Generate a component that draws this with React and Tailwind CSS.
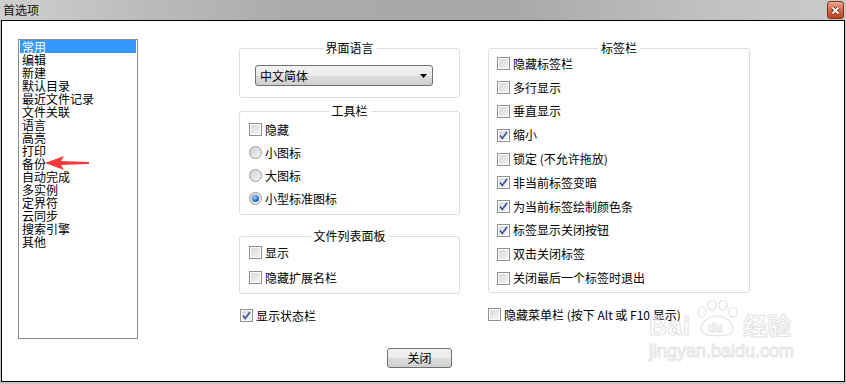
import React from "react";

const F = "font-['Noto_Sans_CJK_SC','Noto_Sans',sans-serif]";

function Check({ checked }) {
  return (
    <span className="relative flex h-[13px] w-[13px] shrink-0 items-center justify-center border border-[#8e8f8f] bg-white">
      <span className="h-[9px] w-[9px] bg-[linear-gradient(135deg,#d8d8d8,#f4f4f4)]" />
      {checked && (
        <svg className="absolute left-[1px] top-[1px]" width="9" height="9" viewBox="0 0 9 9">
          <path d="M1 4.5 L3.3 7.5 L8 1" fill="none" stroke="#3c4f9c" strokeWidth="1.6" />
        </svg>
      )}
    </span>
  );
}

function Radio({ checked }) {
  return (
    <span className="flex h-[13px] w-[13px] shrink-0 items-center justify-center rounded-full border border-[#9a9a9a] bg-[linear-gradient(135deg,#d0d0d0,#f6f6f6)]">
      {checked && (
        <span className="h-[7px] w-[7px] rounded-full bg-[radial-gradient(circle_at_40%_35%,#9fd3ff,#1a6fc9_60%,#0b4d9a)]" />
      )}
    </span>
  );
}

function CRow({ label, checked, h = "h-[23px]" }) {
  return (
    <div className={`flex items-center gap-[3px] ${h}`}>
      <Check checked={checked} />
      <span className="text-[12px] leading-[14px] text-black">{label}</span>
    </div>
  );
}

function RRow({ label, checked }) {
  return (
    <div className="flex h-[23px] items-center gap-[3px]">
      <Radio checked={checked} />
      <span className="text-[12px] leading-[14px] text-black">{label}</span>
    </div>
  );
}

function Group({ title, className, children }) {
  return (
    <div className={`relative rounded-[3px] border border-[#d5dfe5] ${className}`}>
      <span className="absolute left-1/2 top-[-8px] -translate-x-1/2 bg-white px-[3px] text-[12px] leading-[14px] text-black whitespace-nowrap">
        {title}
      </span>
      {children}
    </div>
  );
}

const items = [
  "常用", "编辑", "新建", "默认目录", "最近文件记录", "文件关联", "语言", "高亮", "打印",
  "备份", "自动完成", "多实例", "定界符", "云同步", "搜索引擎", "其他",
];

export default function App() {
  return (
    <div className={`relative h-[384px] w-[846px] overflow-hidden bg-[#c4c4c4] ${F}`}>
      {/* title bar */}
      <div className="flex h-[20px] items-center justify-between bg-[linear-gradient(90deg,#d0d0d0_0%,#bdbdbd_15%,#aaaaaa_35%,#a8a8a8_60%,#c2c2c2_85%,#cacaca_100%)] pl-[3px] pr-[2px]">
        <span className="text-[12px] leading-[14px] text-[#111]">首选项</span>
        <span className="flex h-[18px] w-[17px] items-center justify-center rounded-[3px] border border-[#7a3a28] bg-[linear-gradient(180deg,#eba58d_0%,#d9694b_50%,#c0401f_100%)]">
          <svg width="9" height="9" viewBox="0 0 9 9">
            <path d="M1.5 1.5 L7.5 7.5 M7.5 1.5 L1.5 7.5" stroke="#5a2010" strokeWidth="3.2" />
            <path d="M1.5 1.5 L7.5 7.5 M7.5 1.5 L1.5 7.5" stroke="#ffffff" strokeWidth="1.8" />
          </svg>
        </span>
      </div>

      {/* content */}
      <div className="ml-[1px] flex h-[362px] w-[844px] flex-col border border-black bg-white">
        <div className="flex items-start pl-[16px] pt-[18px]">
          {/* list */}
          <div className="h-[300px] w-[120px] shrink-0 border border-[#8b8b8b] bg-white">
            {items.map((it, i) => (
              <div
                key={it}
                className={`mx-[1px] h-[13px] pl-[2px] text-[12px] leading-[13px] ${
                  i === 0 ? "bg-[#3399ff] text-white" : "text-black"
                }`}
              >
                {it}
              </div>
            ))}
          </div>

          {/* middle column */}
          <div className="ml-[101px] mt-[9px] flex w-[221px] flex-col">
            <Group title="界面语言" className="h-[50px]">
              <div className="ml-[15px] mt-[16px] flex h-[21px] w-[178px] items-center justify-between rounded-[3px] border border-[#707070] bg-[linear-gradient(180deg,#f2f2f2_0%,#ebebeb_50%,#dddddd_51%,#cfcfcf_100%)] pl-[4px] pr-[5px]">
                <span className="text-[12px] leading-[14px] text-black">中文简体</span>
                <svg width="7" height="4" viewBox="0 0 7 4">
                  <path d="M0 0 H7 L3.5 4 Z" fill="#000" />
                </svg>
              </div>
            </Group>
            <Group title="工具栏" className="mt-[13px] h-[104px] pl-[9px] pt-[6px]">
              <CRow label="隐藏" />
              <RRow label="小图标" />
              <RRow label="大图标" />
              <RRow label="小型标准图标" checked />
            </Group>
            <Group title="文件列表面板" className="mt-[21px] h-[58px] pl-[9px] pt-[3px]">
              <CRow label="显示" h="h-[25px]" />
              <CRow label="隐藏扩展名栏" h="h-[25px]" />
            </Group>
            <div className="ml-[1px] mt-[10px]">
              <CRow label="显示状态栏" checked />
            </div>
          </div>

          {/* right column */}
          <div className="ml-[28px] mt-[9px] flex w-[262px] flex-col">
            <Group title="标签栏" className="h-[245px] pl-[8px] pt-[3px]">
              {[
                ["隐藏标签栏", false],
                ["多行显示", false],
                ["垂直显示", false],
                ["缩小", true],
                ["锁定 (不允许拖放)", false],
                ["非当前标签变暗", true],
                ["为当前标签绘制颜色条", true],
                ["标签显示关闭按钮", true],
                ["双击关闭标签", false],
                ["关闭最后一个标签时退出", false],
              ].map(([l, c]) => (
                <CRow key={l} label={l} checked={c} h="h-[23.8px]" />
              ))}
            </Group>
            <div className="mt-[10px]">
              <CRow label="隐藏菜单栏 (按下 Alt 或 F10 显示)" />
            </div>
          </div>
        </div>

        {/* close button */}
        <div className="ml-[385px] mt-[9px] flex h-[20px] w-[65px] items-center justify-center rounded-[3px] border border-[#707070] bg-[linear-gradient(180deg,#f2f2f2_0%,#ebebeb_50%,#dddddd_51%,#cfcfcf_100%)]">
          <span className="text-[12px] leading-[14px] text-black">关闭</span>
        </div>
      </div>

      {/* red arrow annotation */}
      <svg className="absolute left-[44px] top-[154px]" width="46" height="18" viewBox="0 0 46 18">
        <path d="M1 9 L20 2 L17 7 L45 8 L45 10 L17 11 L20 16 Z" fill="#f23a3a" />
      </svg>

      {/* watermark */}
      <div className="pointer-events-none absolute left-[649px] top-[300px] flex flex-col">
        <div className="flex items-end gap-[3px]">
          <span className="text-[25px] font-bold leading-[24px] tracking-[1px] text-transparent [-webkit-text-stroke:1px_#e2e2e2] font-['Liberation_Sans',sans-serif]">Bai</span>
          <svg width="46" height="38" viewBox="0 0 46 38">
            <g fill="none" stroke="#e2e2e2" strokeWidth="1.2">
              <ellipse cx="8" cy="12" rx="4" ry="5" />
              <ellipse cx="18" cy="5" rx="4" ry="5" />
              <ellipse cx="29" cy="5" rx="4" ry="5" />
              <ellipse cx="39" cy="12" rx="4" ry="5" />
              <path d="M8 32 C4 22 16 16 23 16 C30 16 42 22 38 32 C36 37 10 37 8 32 Z" />
            </g>
            <text x="14" y="32" fontSize="12" fontWeight="bold" fill="none" stroke="#e2e2e2" strokeWidth="0.8" fontFamily="Liberation Sans, sans-serif">du</text>
          </svg>
          <span className="text-[24px] font-bold leading-[26px] text-transparent [-webkit-text-stroke:1px_#e2e2e2]">经验</span>
        </div>
        <span className="mt-[4px] text-[18px] leading-[18px] text-transparent [-webkit-text-stroke:1px_#e4e4e4] font-['Liberation_Sans',sans-serif]">jingyan.baidu.com</span>
      </div>
    </div>
  );
}
